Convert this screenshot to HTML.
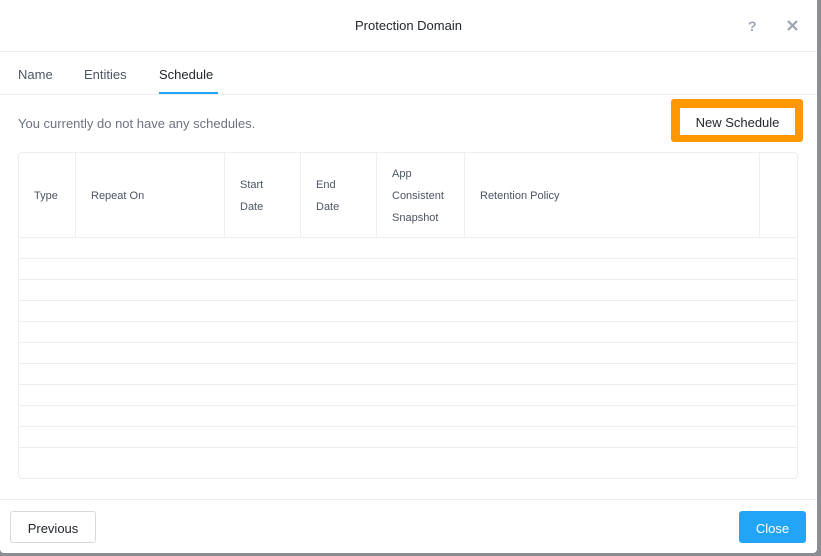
<!DOCTYPE html>
<html><head><style>
*{margin:0;padding:0;box-sizing:border-box}
body{width:821px;height:556px;background:#8a8d91;font-family:"Liberation Sans",sans-serif;position:relative;overflow:hidden}
.m{position:absolute;left:0;top:0;width:817px;height:553px;background:#fff;border-radius:0 0 4px 4px}
.t{position:absolute;font-size:13px;color:#22272e}
.ln{position:absolute;background:#eceef0}
</style></head><body>
<div class="m">
<div class="t" style="left:0;width:817px;text-align:center;top:18px;">Protection Domain</div>
<div class="t" style="left:748px;top:18px;color:#9aa5b1;font-weight:bold;font-size:14px">?</div>
<svg style="position:absolute;left:787px;top:20px" width="11" height="11"><path d="M1 1L10 10M10 1L1 10" stroke="#9aa5b1" stroke-width="2.2"/></svg>
<div class="ln" style="left:0;top:51px;width:817px;height:1px"></div>
<div class="t" style="left:18px;top:67px;color:#4b5563">Name</div>
<div class="t" style="left:84px;top:67px;color:#4b5563">Entities</div>
<div class="t" style="left:159px;top:67px;">Schedule</div>
<div style="position:absolute;left:159px;top:92px;width:59px;height:2px;background:#22a5f7"></div>
<div class="ln" style="left:0;top:94px;width:817px;height:1px"></div>
<div class="t" style="left:18px;top:116px;color:#6b7280">You currently do not have any schedules.</div>
<div style="position:absolute;left:671px;top:99px;width:132px;height:43px;background:#ff9800;border-radius:3px"></div>
<div style="position:absolute;left:680px;top:108px;width:115px;height:27px;background:#fff;font-size:13px;color:#22272e;text-align:center;line-height:30px">New Schedule</div>
<div style="position:absolute;left:18px;top:152px;width:780px;height:327px;border:1px solid #eceef0;border-radius:4px"></div>
<div class="ln" style="left:18px;top:237px;width:780px;height:1px"></div>
<div class="ln" style="left:18px;top:258px;width:780px;height:1px"></div>
<div class="ln" style="left:18px;top:279px;width:780px;height:1px"></div>
<div class="ln" style="left:18px;top:300px;width:780px;height:1px"></div>
<div class="ln" style="left:18px;top:321px;width:780px;height:1px"></div>
<div class="ln" style="left:18px;top:342px;width:780px;height:1px"></div>
<div class="ln" style="left:18px;top:363px;width:780px;height:1px"></div>
<div class="ln" style="left:18px;top:384px;width:780px;height:1px"></div>
<div class="ln" style="left:18px;top:405px;width:780px;height:1px"></div>
<div class="ln" style="left:18px;top:426px;width:780px;height:1px"></div>
<div class="ln" style="left:18px;top:447px;width:780px;height:1px"></div>
<div class="ln" style="left:75px;top:152px;width:1px;height:85px"></div>
<div class="ln" style="left:224px;top:152px;width:1px;height:85px"></div>
<div class="ln" style="left:300px;top:152px;width:1px;height:85px"></div>
<div class="ln" style="left:376px;top:152px;width:1px;height:85px"></div>
<div class="ln" style="left:464px;top:152px;width:1px;height:85px"></div>
<div class="ln" style="left:759px;top:152px;width:1px;height:85px"></div>
<div class="t" style="left:34px;top:190px;font-size:11px;color:#4b5563">Type</div>
<div class="t" style="left:91px;top:190px;font-size:11px;color:#4b5563">Repeat On</div>
<div class="t" style="left:240px;top:174px;font-size:11px;color:#4b5563;line-height:22px">Start<br>Date</div>
<div class="t" style="left:316px;top:174px;font-size:11px;color:#4b5563;line-height:22px">End<br>Date</div>
<div class="t" style="left:392px;top:163px;font-size:11px;color:#4b5563;line-height:22px">App<br>Consistent<br>Snapshot</div>
<div class="t" style="left:480px;top:190px;font-size:11px;color:#4b5563">Retention Policy</div>
<div class="ln" style="left:0;top:499px;width:817px;height:1px"></div>
<div style="position:absolute;left:10px;top:511px;width:86px;height:32px;border:1px solid #d5d9de;border-radius:3px;font-size:13px;color:#22272e;text-align:center;line-height:33px">Previous</div>
<div style="position:absolute;left:739px;top:511px;width:67px;height:32px;background:#22a5f7;border-radius:3px;font-size:13px;color:#fff;text-align:center;line-height:35px">Close</div>
</div>
</body></html>
